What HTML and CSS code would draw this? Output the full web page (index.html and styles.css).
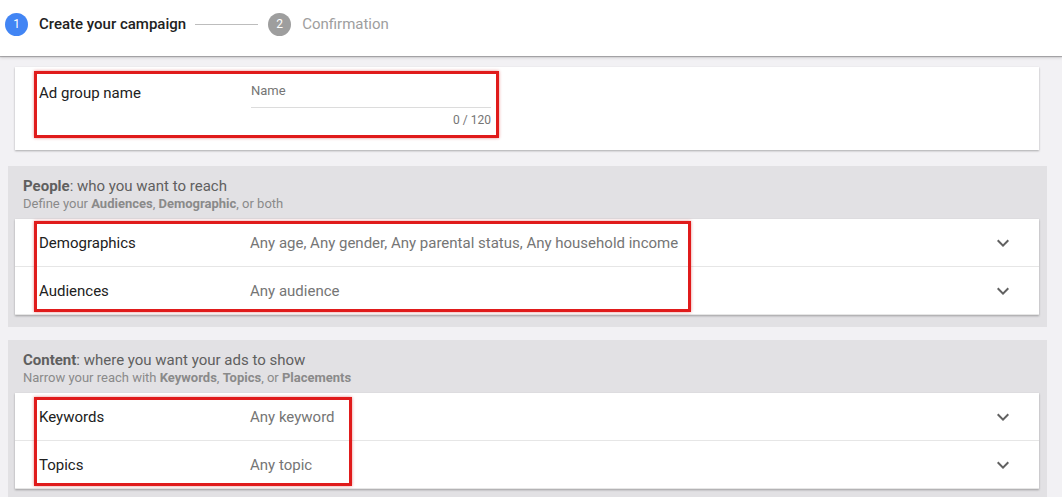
FILE: index.html
```html
<!DOCTYPE html>
<html lang="en">
<head>
    <meta charset="UTF-8">
    <title>Create your campaign</title>
    <link rel="stylesheet" href="styles.css">
</head>
<body>
    <!-- Stepper di atas -->
    <header class="stepper">
        <span class="step-num active">1</span>
        <span class="step-title">Create your campaign</span>
        <span class="step-line"></span>
        <span class="step-num">2</span>
        <span class="step-title muted">Confirmation</span>
    </header>

    <div class="page">
        <!-- Nama ad group -->
        <div class="card name-card">
            <div class="name-row">
                <div class="label">Ad group name</div>
                <div class="field">
                    <div class="placeholder">Name</div>
                    <div class="counter">0 / 120</div>
                </div>
            </div>
            <div class="mark mark-name"></div>
        </div>

        <!-- Targeting: People -->
        <section class="panel">
            <div class="panel-title"><b>People</b>: who you want to reach</div>
            <div class="panel-sub">Define your <b>Audiences</b>, <b>Demographic</b>, or both</div>
            <div class="card">
                <div class="row">
                    <div class="label">Demographics</div>
                    <div class="value">Any age, Any gender, Any parental status, Any household income</div>
                    <svg class="chev" viewBox="0 0 24 24"><path d="M7.41 8.59L12 13.17l4.59-4.58L18 10l-6 6-6-6z"/></svg>
                </div>
                <div class="row">
                    <div class="label">Audiences</div>
                    <div class="value">Any audience</div>
                    <svg class="chev" viewBox="0 0 24 24"><path d="M7.41 8.59L12 13.17l4.59-4.58L18 10l-6 6-6-6z"/></svg>
                </div>
                <div class="mark mark-people"></div>
            </div>
        </section>

        <!-- Targeting: Content -->
        <section class="panel">
            <div class="panel-title"><b>Content</b>: where you want your ads to show</div>
            <div class="panel-sub">Narrow your reach with <b>Keywords</b>, <b>Topics</b>, or <b>Placements</b></div>
            <div class="card">
                <div class="row">
                    <div class="label">Keywords</div>
                    <div class="value">Any keyword</div>
                    <svg class="chev" viewBox="0 0 24 24"><path d="M7.41 8.59L12 13.17l4.59-4.58L18 10l-6 6-6-6z"/></svg>
                </div>
                <div class="row">
                    <div class="label">Topics</div>
                    <div class="value">Any topic</div>
                    <svg class="chev" viewBox="0 0 24 24"><path d="M7.41 8.59L12 13.17l4.59-4.58L18 10l-6 6-6-6z"/></svg>
                </div>
                <div class="mark mark-content"></div>
            </div>
        </section>
    </div>
</body>
</html>
```

FILE: styles.css
```css
/* Umum */
body {
    margin: 0;
    font-family: Roboto, "Liberation Sans", Arial, sans-serif;
    background-color: #f2f1f4;
    color: #212121;
    overflow: hidden;
}

/* Stepper header */
.stepper {
    position: relative;
    z-index: 2;
    height: 48px;
    padding: 0 0 8px 5px;
    background-color: #fff;
    display: flex;
    align-items: center;
    box-shadow: 0 1px 1px rgba(0, 0, 0, 0.25), 0 2px 3px rgba(0, 0, 0, 0.12);
}

.step-num {
    width: 23px;
    height: 23px;
    border-radius: 50%;
    background-color: #9e9e9e;
    color: #fff;
    font-size: 12px;
    display: flex;
    align-items: center;
    justify-content: center;
}

.step-num.active {
    background-color: #4285f4;
}

.step-title {
    margin-left: 11px;
    font-size: 15px;
    font-weight: 500;
    color: #212121;
}

.step-title.muted {
    font-weight: 400;
    color: #9e9e9e;
}

.step-line {
    width: 63px;
    height: 1px;
    background-color: #bdbdbd;
    margin: 0 10px 0 9px;
}

/* Isi halaman */
.page {
    padding: 11px 15px 0 8px;
}

.card {
    position: relative;
    background-color: #fff;
    box-shadow: 0 1px 2px rgba(0, 0, 0, 0.3);
}

.name-card {
    margin: 0 8px 16px 7px;
    padding: 16px 24px 22px;
}

.name-row {
    display: flex;
}

.label {
    width: 211px;
    font-size: 15px;
    line-height: 20px;
}

.field {
    width: 240px;
    margin-left: 1px;
}

.placeholder {
    font-size: 13px;
    line-height: 16px;
    color: #757575;
    padding-bottom: 8px;
    border-bottom: 1px solid #dcdcdc;
}

.counter {
    font-size: 12px;
    line-height: 16px;
    color: #757575;
    text-align: right;
    margin-top: 4px;
}

/* Panel abu-abu */
.panel {
    background-color: #e2e1e4;
    padding: 10px 8px 12px 7px;
    margin-bottom: 13px;
}

.panel-title {
    font-size: 15px;
    line-height: 20px;
    color: #5f5f5f;
    padding-left: 8px;
}

.panel-sub {
    font-size: 13px;
    line-height: 16px;
    color: #8a8a8a;
    padding-left: 8px;
    margin-bottom: 7px;
}

.panel b {
    font-weight: 700;
}

.row {
    display: flex;
    align-items: center;
    box-sizing: border-box;
    height: 48px;
    padding: 0 24px;
    border-bottom: 1px solid #e6e6e6;
}

.row:last-of-type {
    border-bottom: none;
}

.value {
    flex: 1;
    font-size: 15px;
    color: #757575;
}

.chev {
    width: 24px;
    height: 24px;
    fill: #616161;
}

/* Kotak merah anotasi */
.mark {
    position: absolute;
    left: 19px;
    border: 3px solid #e01b1b;
    box-shadow: 0 0 3px rgba(200, 0, 0, 0.45);
    box-sizing: border-box;
}

.mark-name {
    top: 4px;
    width: 465px;
    height: 67px;
}

.mark-people {
    top: 2px;
    width: 657px;
    height: 91px;
}

.mark-content {
    top: 4px;
    width: 318px;
    height: 89px;
}
```
